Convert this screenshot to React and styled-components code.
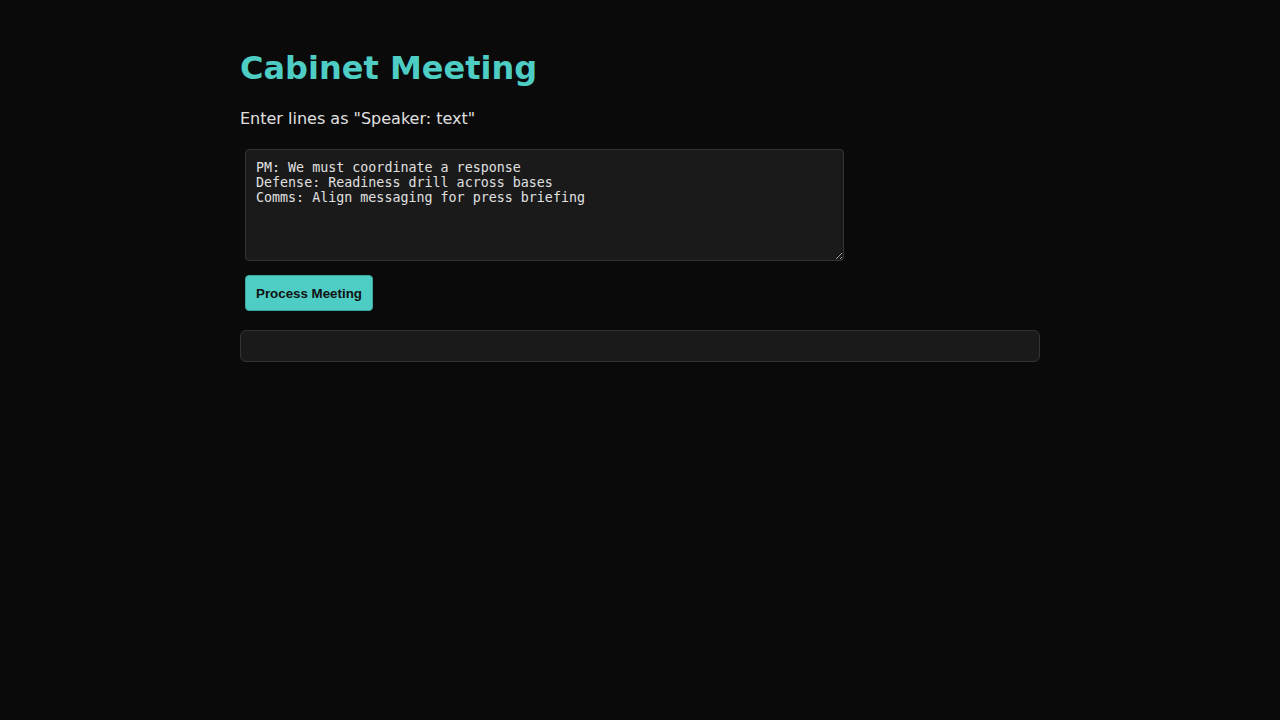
import React, { useState } from "react";
import styled, { createGlobalStyle } from "styled-components";

const Global = createGlobalStyle`
  html, body { margin: 0; padding: 0; background: #0a0a0a; }
  body { font-family: "DejaVu Sans", sans-serif; color: #e0e0e0; }
`;

const Container = styled.main`
  max-width: 800px;
  margin: 0 auto;
  padding: 50px 20px 20px;
  display: flex;
  flex-direction: column;
`;

const Title = styled.h1`
  margin: 0;
  font-family: "DejaVu Sans", sans-serif;
  font-size: 32px;
  line-height: 37px;
  font-weight: bold;
  color: #4ecdc4;
`;

const Hint = styled.p`
  margin: 22px 0 0;
  font-size: 16px;
  line-height: 19px;
  color: #e0e0e0;
`;

const Input = styled.textarea`
  display: block;
  box-sizing: border-box;
  width: 599px;
  height: 112px;
  margin: 21px 5px 0;
  padding: 10px;
  background: #1a1a1a;
  color: #e0e0e0;
  border: 1px solid #333;
  border-radius: 4px;
  font-family: "DejaVu Sans Mono", monospace;
  font-size: 13.333px;
  line-height: 15px;
  resize: both;
  outline: none;
`;

const Button = styled.button`
  align-self: flex-start;
  box-sizing: border-box;
  height: 36px;
  margin: 14px 5px 0;
  padding: 0 10px;
  background: #4ecdc4;
  color: #111;
  border: 1px solid #3aa79f;
  border-radius: 4px;
  font-family: "Liberation Sans", Arial, sans-serif;
  font-size: 13.333px;
  font-weight: bold;
  cursor: pointer;
`;

const Output = styled.section`
  box-sizing: border-box;
  margin-top: 19px;
  min-height: 32px;
  padding: 15px;
  background: #1a1a1a;
  border: 1px solid #333;
  border-radius: 6px;
`;

export default function App() {
  const [text, setText] = useState(
    "PM: We must coordinate a response\nDefense: Readiness drill across bases\nComms: Align messaging for press briefing"
  );
  return (
    <>
      <Global />
      <Container>
        <Title>Cabinet Meeting</Title>
        <Hint>Enter lines as "Speaker: text"</Hint>
        <Input value={text} onChange={(e) => setText(e.target.value)} />
        <Button>Process Meeting</Button>
        <Output />
      </Container>
    </>
  );
}
